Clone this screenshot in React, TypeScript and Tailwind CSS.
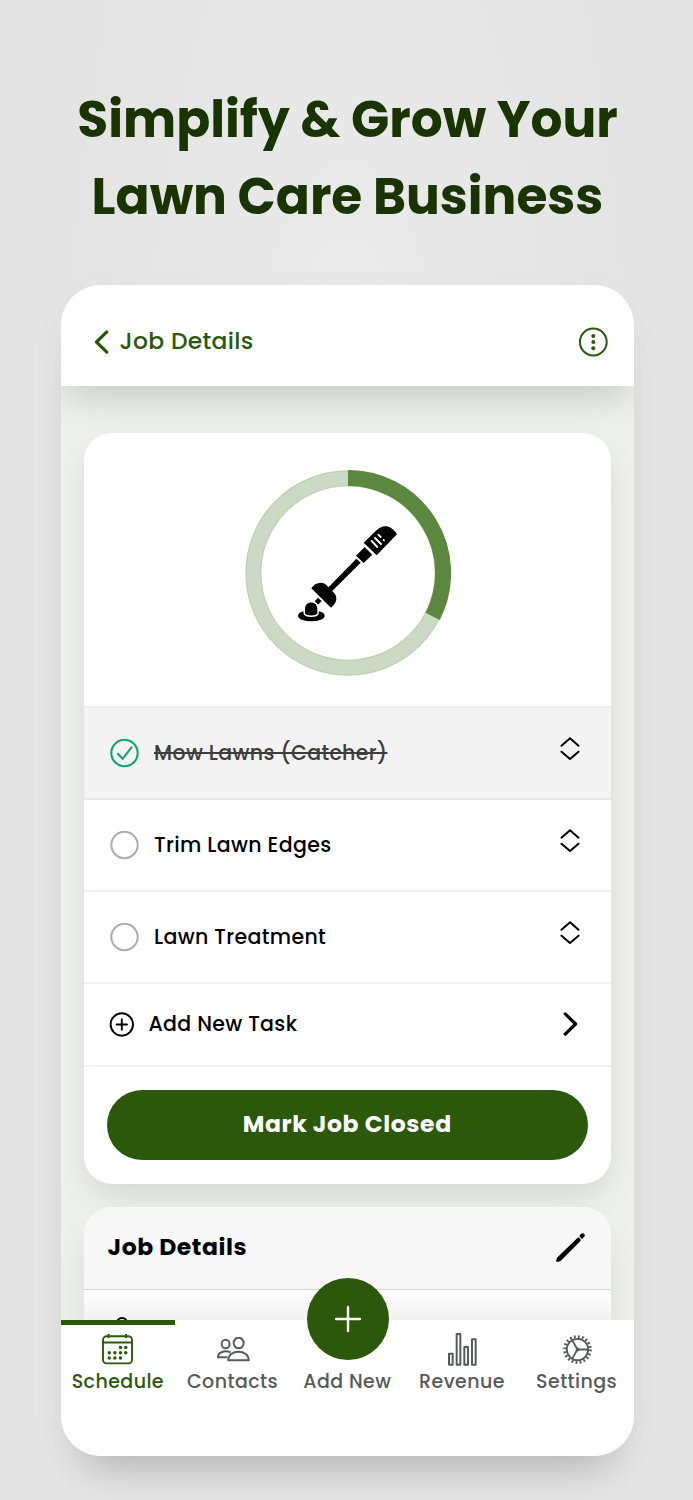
import { useState } from 'react';

interface Task {
  id: number;
  name: string;
  done: boolean;
}

const TASKS: Task[] = [
  { id: 1, name: 'Mow Lawns (Catcher)', done: true },
  { id: 2, name: 'Trim Lawn Edges', done: false },
  { id: 3, name: 'Lawn Treatment', done: false },
];

function ChevronIcon({ className = '' }: { className?: string }) {
  return (
    <svg className={`w-[15px] h-6 ${className}`} viewBox="0 0 15 24" fill="none" stroke="currentColor" strokeWidth={3.2} strokeLinecap="round" strokeLinejoin="round">
      <path d="M2.2 1.9 12.6 12 2.2 22.1" />
    </svg>
  );
}

function MoreIcon() {
  return (
    <svg className="w-[30px] h-[30px]" viewBox="0 0 30 30" fill="none" stroke="currentColor" strokeWidth={2}>
      <circle cx="15.3" cy="15" r="13.4" />
      <g fill="currentColor" stroke="none">
        <circle cx="15.3" cy="8.9" r="2" />
        <circle cx="15.3" cy="15" r="2" />
        <circle cx="15.3" cy="21.2" r="2" />
      </g>
    </svg>
  );
}

function SortIcon() {
  return (
    <svg className="w-5 h-6" viewBox="0 0 20 24" fill="none" stroke="currentColor" strokeWidth={2} strokeLinecap="round" strokeLinejoin="round">
      <path d="M1.5 8.7 10 1.3 18.5 8.7M1.5 14.7 10 22.1 18.5 14.7" />
    </svg>
  );
}

function TaskCheck({ done }: { done: boolean }) {
  return (
    <svg className={`w-[29px] h-[29px] ${done ? 'text-[#0da574]' : 'text-[#adadad]'}`} viewBox="0 0 29 29" fill="none" stroke="currentColor" strokeWidth={2.1} strokeLinecap="round" strokeLinejoin="round">
      <circle cx="14.5" cy="14" r="13.2" />
      {done && <path d="M7.8 14.8 12.5 19.8 21.5 8.3" />}
    </svg>
  );
}

function ProgressRing() {
  return (
    <svg className="w-[206px] h-[206px]" viewBox="30 30 618 618">
      <circle cx="339" cy="339" r="284" fill="none" stroke="#bfceb4" strokeWidth="48" />
      <circle cx="339" cy="339" r="284" fill="none" stroke="#ccd9c4" strokeWidth="41" />
      <path d="M339 54A285 285 0 0 1 593 469" fill="none" stroke="#5c873f" strokeWidth="48" />
      {/* Trimmer */}
      <path d="M386 248 422 213C443 193 466 193 486 223L425 286Z" />
      <path d="M363 287 389 261 412 284 386 309Z" />
      <path d="M279 383 364 296 377 308 291 394Z" />
      <path d="M229 385C240 368 260 362 274 375L298 400C308 411 306 430 288 443Z" />
      <path d="M239 424 249 413 260 423 249 434Z" />
      <ellipse cx="229" cy="467" rx="40" ry="17" />
      <path d="M209 460V446C209 421 248 421 248 446V460C244 470 213 470 209 460Z" stroke="#fff" strokeWidth="7" />
      <path d="M210 460V446C210 421 247 421 247 446V460C243 469 214 469 210 460Z" />
      <g stroke="#fff" strokeWidth="5.5" strokeLinecap="round">
        <path d="M410 243 427 261M420 234 438 252M430 224 437 231M446 240 447 241" />
      </g>
    </svg>
  );
}

function PencilIcon() {
  return (
    <svg className="w-[29px] h-[29px]" viewBox="0 0 87 87">
      <path d="M1 86C0 80 2 75 6 71L65 14C70 13 75 18 74 23L17 81C13 85 7 87 1 86Z" />
      <path d="M70 10C73 4 76 1 80 1 85 2 87 5 86 9 84 13 82 15 78 18Z" />
    </svg>
  );
}

function CalendarIcon() {
  return (
    <svg className="w-[31px] h-[31px]" viewBox="0 0 94 94" fill="none" stroke="currentColor" strokeWidth={5.8}>
      <rect x="3" y="7" width="88" height="82" rx="11" />
      <path d="M3 26H91M20 0V12M73 0V12" />
      <g fill="currentColor" stroke="none">
        <circle cx="56" cy="41" r="5.3" />
        <circle cx="72" cy="41" r="5.3" />
        <circle cx="22" cy="57" r="5.3" />
        <circle cx="39" cy="57" r="5.3" />
        <circle cx="56" cy="57" r="5.3" />
        <circle cx="72" cy="57" r="5.3" />
        <circle cx="22" cy="73" r="5.3" />
        <circle cx="39" cy="73" r="5.3" />
        <circle cx="56" cy="73" r="5.3" />
      </g>
    </svg>
  );
}

function ContactsIcon() {
  return (
    <svg className="ml-[1px] w-[33px] h-[25px]" viewBox="0 0 99 75" fill="none" stroke="currentColor" strokeWidth={5.8} strokeLinejoin="round">
      <ellipse cx="26" cy="21" rx="12" ry="13" />
      <ellipse cx="65" cy="18" rx="15" ry="16" />
      <path d="M34 70C32 36 97 36 95 70ZM31 61H3C2 46 24 38 41 47" />
    </svg>
  );
}

function RevenueIcon() {
  return (
    <svg className="ml-[1px] w-[29px] h-[33px]" viewBox="0 0 87 99" fill="none" stroke="currentColor" strokeWidth={6} strokeLinejoin="round">
      <path d="M3 62H14V95H3ZM26 3H37V95H26ZM49 42H60V95H49ZM72 19H83V95H72Z" />
    </svg>
  );
}

function SettingsIcon() {
  return (
    <svg className="ml-[1px] w-[29px] h-[29px]" viewBox="-43.5 -43.5 87 87" fill="none" stroke="currentColor" strokeWidth={5.4}>
      <circle r="32" />
      <circle r="38.5" strokeWidth={9} strokeDasharray="5.6 6.495" />
      <path d="M3 0H32M-2-3-16-28M-2 3-16 28" />
      <circle r="3" />
    </svg>
  );
}

const TABS = [
  { label: 'Schedule', icon: <CalendarIcon /> },
  { label: 'Contacts', icon: <ContactsIcon /> },
  { label: 'Add New', icon: null },
  { label: 'Revenue', icon: <RevenueIcon /> },
  { label: 'Settings', icon: <SettingsIcon /> },
];

export default function App() {
  const [tasks, setTasks] = useState(TASKS);
  const [activeTab, setActiveTab] = useState('Schedule');

  const toggleTask = (id: number) => {
    setTasks(prev => prev.map(t => (t.id === id ? { ...t, done: !t.done } : t)));
  };

  return (
    <div className="w-[693px] h-[1500px] overflow-hidden bg-radial-[at_50%_30%] from-[#ebebeb] to-[#e4e4e4] to-60% font-[Poppins,Inter,sans-serif] font-medium text-black whitespace-nowrap">
      <h1 className="pt-[81px] pl-[2px] h-[285px] text-center text-[50.2px] leading-[77px] font-bold text-[#193401]">
        <span className="block">Simplify &amp; Grow Your</span>
        <span className="block">Lawn Care Business</span>
      </h1>

      <div className="ml-[60.5px] w-[573.5px] h-[1171px] rounded-[40px] shadow-[0_34px_40px_-24px_rgba(0,0,0,0.2),0_10px_40px_rgba(0,0,0,0.03)]">
        <div className="flex flex-col h-full rounded-[40px] overflow-hidden bg-[#eef0eb]">
          <header className="relative z-10 shrink-0 h-[101px] pt-[13px] pl-[33px] pr-[26px] flex items-center bg-white text-[#2b580b] shadow-[0_16px_36px_-6px_rgba(0,0,0,0.17)]">
            <ChevronIcon className="rotate-180" />
            <span className="ml-[11px] -mt-[2px] text-[23.4px] tracking-[0.33px]">Job Details</span>
            <button className="ml-auto">
              <MoreIcon />
            </button>
          </header>

          <main className="h-[933.5px] shrink-0 px-[23.5px] pt-[47px] overflow-hidden">
            <section className="h-[751px] rounded-[28px] bg-white overflow-hidden shadow-[0_14px_36px_-8px_rgba(0,0,0,0.14)]">
              <div className="h-[273px] pt-[37px] pl-[2px] flex justify-center">
                <ProgressRing />
              </div>

              {tasks.map(task => (
                <div
                  key={task.id}
                  onClick={() => toggleTask(task.id)}
                  className={`h-[92px] pl-[26px] pr-[31px] flex items-center border-t-2 text-[20.5px] tracking-[0.36px] ${
                    task.done ? 'bg-[#f3f3f3] border-[#efefef]' : 'border-[#f1f1f0]'
                  } [&:nth-child(3)]:border-[#e6e6e6]`}
                >
                  <TaskCheck done={task.done} />
                  <span className={`ml-[15px] ${task.done ? 'text-[#3d3d3d] line-through decoration-2' : ''}`}>
                    {task.name}
                  </span>
                  <span className="ml-auto mb-[9px]">
                    <SortIcon />
                  </span>
                </div>
              ))}

              <div className="h-[83px] pl-[25px] pr-[33px] pb-[1px] flex items-center border-t-2 border-[#f1f1f1] text-[20.5px]">
                <svg className="w-[25px] h-[25px]" viewBox="0 0 25 25" fill="none" stroke="currentColor" strokeWidth={1.9} strokeLinecap="round">
                  <circle cx="12.8" cy="12.5" r="11.2" />
                  <path d="M12.8 7.3V17.7M7.6 12.5H18" />
                </svg>
                <span className="ml-[14.5px] tracking-[0.33px]">Add New Task</span>
                <ChevronIcon className="ml-auto" />
              </div>

              <div className="border-t-2 border-[#f1f1f1] px-[23px] pt-[23px]">
                <button className="w-full h-[70px] pb-[2px] rounded-full bg-[#2b580b] text-white text-[23.5px] font-bold tracking-[0.6px]">
                  Mark Job Closed
                </button>
              </div>
            </section>

            <section className="mt-[23px] h-[160px] rounded-t-[28px] bg-white shadow-[0_24px_36px_rgba(0,0,0,0.08)]">
              <div className="h-[83px] rounded-t-[28px] border-b-[1.5px] border-[#d2d4d2] bg-[#f7f7f7] pl-[23.5px] pr-[26px] pb-[1px] flex items-center justify-between">
                <h2 className="-mt-[2px] text-[23.5px] font-bold tracking-[0.55px]">Job Details</h2>
                <PencilIcon />
              </div>
              <div className="h-[30px] pt-[27px] pl-[32px] bg-linear-to-b from-white to-[#f1f1f1]">
                <div className="w-3 h-3 rounded-full border-2 border-black" />
              </div>
            </section>
          </main>

          <nav className="relative z-20 grow grid grid-cols-5 bg-white text-[19px] tracking-[0.42px] text-[#58595b]">
            {TABS.map(({ label, icon }) => (
              <button
                key={label}
                onClick={() => setActiveTab(label)}
                className={`h-[88px] flex flex-col items-center border-t-[5px] ${
                  label === activeTab ? 'border-[#2b580b] text-[#2b580b]' : 'border-transparent'
                }`}
              >
                <span className="h-[47px] pt-[2px] flex items-center">{icon}</span>
                <span className="leading-[20px]">{label}</span>
              </button>
            ))}
            <span className="absolute left-1/2 -top-[41.5px] -ml-[40.5px] w-[82px] h-[82px] rounded-full bg-[#2b580b] flex items-center justify-center text-white">
              <svg className="w-7 h-7" viewBox="0 0 28 28" fill="none" stroke="currentColor" strokeWidth={2.4} strokeLinecap="round">
                <path d="M14 2V26M2 14H26" />
              </svg>
            </span>
          </nav>
        </div>
      </div>
    </div>
  );
}
